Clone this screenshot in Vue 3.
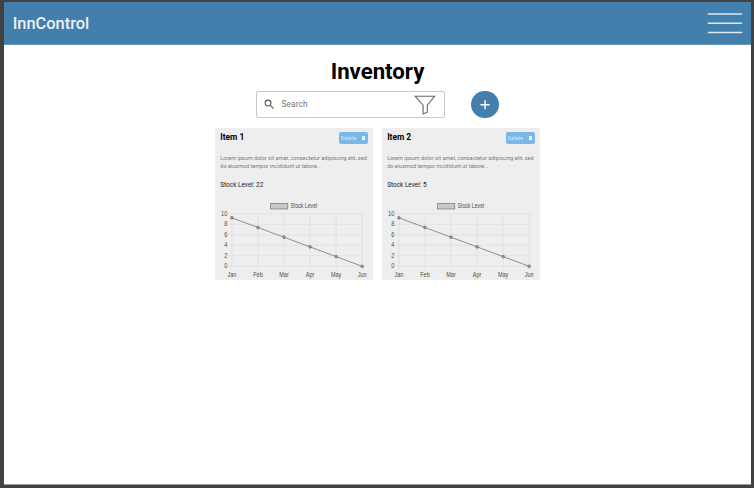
<script setup>
const description =
  ['Lorem ipsum dolor sit amet, consectetur adipiscing elit, sed', 'do eiusmod tempor incididunt ut labore...']
const items = [
  { name: 'Item 1', stock: 22 },
  { name: 'Item 2', stock: 5 },
]
const left = 16.9
const top = 13.8
const stepX = 26.06
const stepY = 10.5
const months = ['Jan', 'Feb', 'Mar', 'Apr', 'May', 'Jun'].map((label, i) => ({
  label,
  x: left + i * stepX,
  y: 17.8 + i * 9.7,
}))
const ticks = [10, 8, 6, 4, 2, 0].map((label, i) => ({ label, y: top + i * stepY }))
const line = months.map((m) => `${m.x},${m.y}`).join(' ')
</script>

<template>
  <div class="frame">
    <div class="page">
      <header class="navbar">
        <span class="brand">InnControl</span>
        <svg class="menu" viewBox="0 0 36 22" width="36" height="22">
          <path d="M.8 2.1H35.2M.8 11.2H35.2M.8 20.4H35.2" />
        </svg>
      </header>
      <main>
        <h1>Inventory</h1>
        <div class="toolbar">
          <div class="search">
            <svg class="lens" viewBox="0 0 24 24">
              <path d="M15.5 14h-.79l-.28-.27A6.47 6.47 0 0 0 16 9.5 6.5 6.5 0 1 0 9.5 16c1.61 0 3.09-.59 4.23-1.57l.27.28v.79l5 4.99L20.49 19l-4.99-5zm-6 0C7.01 14 5 11.99 5 9.5S7.01 5 9.5 5 14 7.01 14 9.5 11.99 14 9.5 14z" />
            </svg>
            <span class="placeholder">Search</span>
            <svg class="funnel" viewBox="0 0 22 20">
              <path d="M1.2 1.3H20.6L13.3 10.2V17.2L9.1 18.9V10.2Z" />
            </svg>
          </div>
          <button class="add" aria-label="Add item">
            <svg viewBox="0 0 28 28"><path d="M14.3 9.3V18.7M9.6 14H19" /></svg>
          </button>
        </div>
        <section class="cards">
          <article v-for="item in items" :key="item.name" class="card">
            <div class="card-head">
              <h2>{{ item.name }}</h2>
              <button class="delete">
                <span>Delete</span>
                <svg viewBox="0 0 14 18"><path d="M1 5H13V16Q13 18 11 18H3Q1 18 1 16ZM0 1H4L5 0H9L10 1H14V4H0Z" /></svg>
              </button>
            </div>
            <p class="description"><span v-for="text in description" :key="text">{{ text }}</span></p>
            <p class="stock">Stock Level: {{ item.stock }}</p>
            <svg class="chart" viewBox="0 0 158 80">
              <rect class="swatch" x="55.4" y="3.4" width="17.4" height="5.6" />
              <text x="75.5" y="8.1" textLength="26.7" lengthAdjust="spacingAndGlyphs">Stock Level</text>
              <g v-for="tick in ticks" :key="tick.label">
                <line class="grid" :x1="left - 3" :x2="left + stepX * 5" :y1="tick.y" :y2="tick.y" />
                <text class="tick" x="12.3" :y="tick.y + 2">{{ tick.label }}</text>
              </g>
              <g v-for="month in months" :key="month.label">
                <line class="grid" :x1="month.x" :x2="month.x" :y1="top" :y2="top + stepY * 5 + 3" />
                <text class="month" :x="month.x" y="77.1">{{ month.label }}</text>
              </g>
              <polyline class="series" :points="line" />
              <circle v-for="month in months" :key="month.label" class="dot" :cx="month.x" :cy="month.y" r="1.4" />
            </svg>
          </article>
        </section>
      </main>
    </div>
  </div>
</template>

<style>
body {
  background: #434242;
}
</style>

<style scoped>
.frame {
  box-sizing: border-box;
  height: 488px;
  padding: 1.5px 3px 3.5px 4px;
  background: #434242;
  font-family: Roboto, sans-serif;
}
.page {
  box-sizing: border-box;
  height: 483px;
  background: #fff;
  border-bottom: 1px solid #999;
}
.navbar {
  box-sizing: border-box;
  display: flex;
  align-items: center;
  justify-content: space-between;
  height: 43px;
  padding: 0 8px 0 8.7px;
  background: #427fac;
  border-bottom: 1px solid #6798bc;
}
.brand {
  padding-top: 2px;
  color: #eef1f4;
  font-size: 16.4px;
  font-weight: 500;
  line-height: 20px;
}
.menu path {
  fill: none;
  stroke: #dfe8ef;
  stroke-width: 1.5;
}
main {
  display: flex;
  flex-direction: column;
  align-items: center;
}
h1 {
  margin: 13px 0 0;
  color: #000;
  font-size: 22.2px;
  font-weight: 700;
  line-height: 26px;
}
.toolbar {
  display: flex;
  align-items: center;
  gap: 26px;
  margin-top: 7px;
}
.search {
  box-sizing: border-box;
  display: flex;
  align-items: center;
  width: 189px;
  height: 27.5px;
  padding: 0 8.5px 0 6px;
  border: 1px solid #c8c8c8;
  border-radius: 2px;
}
.lens {
  width: 12.8px;
  height: 12.8px;
  fill: #555;
}
.placeholder {
  flex: 1;
  margin-left: 5.5px;
  color: #717171;
  font-size: 8.2px;
  letter-spacing: 0.15px;
}
.funnel {
  width: 22px;
  height: 20px;
  padding-top: 1px;
  fill: none;
  stroke: #666;
  stroke-width: 1.1;
}
.add {
  width: 27.5px;
  height: 27.5px;
  padding: 0;
  border: 0;
  border-radius: 50%;
  background: #427fac;
}
.add svg {
  display: block;
  stroke: #fff;
  stroke-width: 1.4;
}
.cards {
  display: flex;
  gap: 9.3px;
  margin-top: 9.5px;
}
.card {
  box-sizing: border-box;
  width: 157.6px;
  height: 152px;
  background: #eee;
}
.card-head {
  display: flex;
  align-items: flex-start;
  justify-content: space-between;
  height: 26px;
  padding: 4.3px 5px 0;
  box-sizing: border-box;
}
h2 {
  margin: 0;
  color: #000;
  font-size: 8.4px;
  font-weight: 700;
  line-height: 10px;
}
.delete {
  display: flex;
  align-items: center;
  justify-content: space-between;
  width: 29px;
  height: 12px;
  padding: 0 2.5px 0 2px;
  border: 0;
  border-radius: 2px;
  background: #7ab8eb;
  color: #d7eafa;
  font: 5.2px Roboto, sans-serif;
  letter-spacing: 0.15px;
}
.delete svg {
  width: 3.5px;
  height: 4.6px;
  fill: #fff;
}
.description {
  margin: 0;
  padding-left: 5px;
  color: #7b7b7b;
  font-size: 5.55px;
  line-height: 8.4px;
  white-space: nowrap;
}
.description span {
  display: block;
}
.stock {
  margin: 10.2px 0 0;
  padding-left: 5px;
  color: #222;
  font-size: 6.45px;
  line-height: 9px;
}
.chart {
  display: block;
  width: 158px;
  height: 80px;
  margin-top: 10px;
}
.chart text {
  fill: #4c4c4c;
  font: 6.3px "Liberation Sans", sans-serif;
}
.chart .tick {
  text-anchor: end;
  transform-box: fill-box;
  transform-origin: right center;
  transform: scaleX(0.9);
}
.chart .month {
  text-anchor: middle;
  transform-box: fill-box;
  transform-origin: center;
  transform: scaleX(0.87);
}
.swatch {
  fill: #c8c8c8;
  stroke: #777;
  stroke-width: 0.7;
}
.grid {
  stroke: #dcdcdc;
  stroke-width: 0.7;
}
.series {
  fill: none;
  stroke: #777;
  stroke-width: 0.8;
}
.dot {
  fill: #999;
  stroke: #666;
  stroke-width: 0.6;
}
</style>
